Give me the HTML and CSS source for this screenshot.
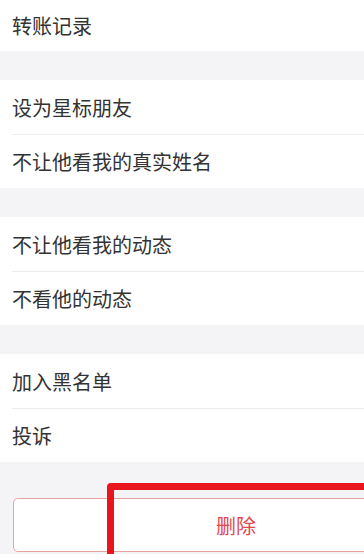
FILE: index.html
```html
<!DOCTYPE html>
<html lang="zh-CN">
<head>
<meta charset="utf-8">
<title>资料设置</title>
<link rel="stylesheet" href="styles.css">
</head>
<body>
<div class="page">
  <div class="group first">
    <div class="row top">转账记录</div>
  </div>
  <div class="group">
    <div class="row">设为星标朋友</div>
    <div class="row">不让他看我的真实姓名</div>
  </div>
  <div class="group">
    <div class="row">不让他看我的动态</div>
    <div class="row">不看他的动态</div>
  </div>
  <div class="group">
    <div class="row">加入黑名单</div>
    <div class="row">投诉</div>
  </div>
  <div class="actions">
    <button class="delete">删除</button>
  </div>
  <div class="highlight"></div>
</div>
</body>
</html>
```

FILE: styles.css
```css
* { box-sizing: border-box; }
html, body {
  margin: 0;
  padding: 0;
  width: 364px;
  height: 554px;
  overflow: hidden;
  background: #f4f3f5;
  font-family: "Noto Sans CJK SC", "Noto Sans", sans-serif;
}
.page {
  position: relative;
  width: 364px;
  height: 554px;
  overflow: hidden;
  display: flex;
  flex-direction: column;
}
.group {
  background: #ffffff;
  margin-top: 29px;
  display: flex;
  flex-direction: column;
}
.group.first { margin-top: 0; }
.row {
  height: 54px;
  display: flex;
  align-items: center;
  padding-left: 12px;
  font-size: 20px;
  color: #333333;
  position: relative;
}
.row.top { height: 51px; }
.row + .row { border-top: 1px solid #ededed; margin-left: 12px; padding-left: 0; }
.actions {
  margin-top: 36px;
  padding-left: 13px;
  display: flex;
}
.delete {
  flex: none;
  width: 446px;
  height: 54px;
  background: #ffffff;
  border: 1px solid #e9a2a2;
  border-radius: 5px;
  color: #e2474d;
  font-family: "Noto Sans CJK SC", "Noto Sans", sans-serif;
  font-size: 20px;
  padding: 0;
}
.highlight {
  position: absolute;
  left: 107px;
  top: 483px;
  width: 400px;
  height: 200px;
  border: 7px solid #e8151d;
  border-radius: 4px;
}
```
